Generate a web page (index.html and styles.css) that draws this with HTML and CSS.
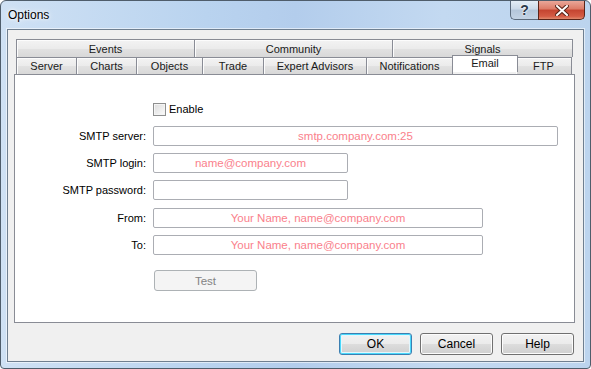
FILE: index.html
```html
<!DOCTYPE html>
<html lang="en">
<head>
  <meta charset="UTF-8" />
  <title>Options</title>
  <link rel="stylesheet" href="styles.css">
</head>
<body>
  <div class="window">
    <div class="titlebar">
      <span class="title">Options</span>
      <div class="caption-btns">
        <span class="cap cap-help">?</span>
        <span class="cap cap-close">
          <svg width="14" height="11" viewBox="0 0 14 11">
            <path d="M2 1 L12 10 M12 1 L2 10" stroke="#5a2418" stroke-width="4" stroke-linecap="square"/>
            <path d="M2 1 L12 10 M12 1 L2 10" stroke="#ffffff" stroke-width="2" stroke-linecap="square"/>
          </svg>
        </span>
      </div>
    </div>

    <div class="client">
      <div class="tab-row">
        <div class="tab w179">Events</div>
        <div class="tab w198">Community</div>
        <div class="tab w180">Signals</div>
      </div>
      <div class="tab-row">
        <div class="tab w61">Server</div>
        <div class="tab w60">Charts</div>
        <div class="tab w66">Objects</div>
        <div class="tab w61">Trade</div>
        <div class="tab w103">Expert Advisors</div>
        <div class="tab w86">Notifications</div>
        <div class="tab w64 selected">Email</div>
        <div class="tab w56">FTP</div>
      </div>

      <div class="panel">
        <div class="form">
          <span></span>
          <label class="check"><span class="box"></span>Enable</label>

          <span class="label">SMTP server:</span>
          <input class="field wide" type="text" placeholder="smtp.company.com:25">

          <span class="label">SMTP login:</span>
          <input class="field short" type="text" placeholder="name@company.com">

          <span class="label">SMTP password:</span>
          <input class="field short" type="text">

          <span class="label shift">From:</span>
          <input class="field mid shift" type="text" placeholder="Your Name, name@company.com">

          <span class="label">To:</span>
          <input class="field mid" type="text" placeholder="Your Name, name@company.com">

          <span></span>
          <div class="test-wrap"><button class="btn-test" disabled>Test</button></div>
        </div>
      </div>

      <div class="footer">
        <button class="btn default">OK</button>
        <button class="btn">Cancel</button>
        <button class="btn">Help</button>
      </div>
    </div>
  </div>
</body>
</html>
```

FILE: styles.css
```css
* {
  box-sizing: border-box;
}

body {
  margin: 0;
  font-family: 'Liberation Sans', Arial, sans-serif;
  font-size: 11px;
  color: #000;
  background: #fff;
}

.window {
  width: 591px;
  height: 369px;
  border: 1px solid #4f5d6b;
  border-radius: 6px 6px 4px 4px;
  background: linear-gradient(to right, #cfe1f4 0%, #b9d3ef 35%, #b3cdec 50%, #c3d9f1 75%, #bcd4ee 100%);
  display: flex;
  flex-direction: column;
  overflow: hidden;
}

.titlebar {
  height: 28px;
  display: flex;
  justify-content: space-between;
  align-items: flex-start;
  padding-left: 7px;
}

.title {
  font-size: 12px;
  margin-top: 7px;
  color: #000;
  text-shadow: 0 0 6px #ffffff, 0 0 3px #ffffff;
}

.caption-btns {
  display: flex;
  margin-right: 5px;
}

.cap {
  height: 19px;
  display: flex;
  align-items: center;
  justify-content: center;
  border: 1px solid #5b6a7c;
  border-top: none;
}

.cap-help {
  width: 28px;
  border-right: none;
  border-radius: 0 0 0 5px;
  background: linear-gradient(#e4edf6 0%, #cbd9e8 45%, #b4c6da 50%, #c3d3e5 100%);
  color: #2c3a4a;
  font-size: 14px;
  font-weight: bold;
  text-shadow: 0 0 2px #fff, 0 0 2px #fff;
}

.cap-close {
  width: 47px;
  border-color: #5a2418;
  border-radius: 0 0 5px 0;
  background: linear-gradient(#e9a799 0%, #dc7a66 45%, #c44430 50%, #d45b44 85%, #e08a6e 100%);
}

.client {
  flex: 1;
  margin: 0 6px 6px 6px;
  border: 1px solid #6f7f90;
  background: #f0f0f0;
  padding-top: 9px;
  box-shadow: 0 0 0 1px rgba(255, 255, 255, 0.55);
}

.tab-row {
  display: flex;
  margin: 0 10px 0 8px;
}

.tab {
  height: 18px;
  display: flex;
  align-items: center;
  justify-content: center;
  border: 1px solid #898c95;
  border-bottom: none;
  border-left: none;
  background: linear-gradient(#f3f3f3 0%, #ebebeb 50%, #e2e2e2 51%, #d8d8d8 100%);
  box-shadow: inset 1px 1px 0 #fcfcfc;
  color: #1a1a1a;
  white-space: nowrap;
}

.tab:first-child {
  border-left: 1px solid #898c95;
}

.tab-row + .tab-row .tab {
  height: 17px;
}

.tab.selected {
  position: relative;
  z-index: 1;
  height: 20px;
  margin: -2px -2px -1px -1px;
  width: 66px;
  border-left: 1px solid #898c95;
  background: #ffffff;
  box-shadow: none;
  padding-bottom: 3px;
}

.w56 { width: 56px; }
.w60 { width: 60px; }
.w61 { width: 61px; }
.w64 { width: 64px; }
.w66 { width: 66px; }
.w86 { width: 86px; }
.w103 { width: 103px; }
.w179 { width: 179px; }
.w180 { width: 180px; }
.w198 { width: 198px; }

.panel {
  height: 249px;
  margin: 0 8px 0 6px;
  border: 1px solid #898c95;
  background: #ffffff;
  padding-top: 24px;
}

.form {
  display: grid;
  grid-template-columns: 131px 1fr;
  column-gap: 7px;
  row-gap: 7px;
  align-items: center;
}

.label {
  text-align: right;
}

.check {
  height: 20px;
  display: flex;
  align-items: center;
  gap: 3px;
}

.box {
  width: 13px;
  height: 13px;
  border: 1px solid #8e8f8f;
  background: linear-gradient(135deg, #dcdcdc, #fbfbfb);
  box-shadow: inset 0 0 0 1px #f4f4f4;
}

.field {
  height: 20px;
  border: 1px solid #abadb3;
  border-radius: 2px;
  font-family: 'Liberation Sans', Arial, sans-serif;
  font-size: 11.5px;
  text-align: center;
  padding: 0 4px;
  background: #fff;
}

.field::placeholder {
  color: #fa7f8c;
  opacity: 1;
}

.wide { width: 405px; }
.short { width: 195px; }
.mid { width: 330px; }

.shift {
  margin-top: 1px;
}

.test-wrap {
  padding-top: 8px;
}

.btn-test {
  width: 103px;
  height: 21px;
  margin-left: 1px;
  border: 1px solid #adb2b5;
  border-radius: 3px;
  background: #f4f4f4;
  color: #838383;
  font-family: 'Liberation Sans', Arial, sans-serif;
  font-size: 11.5px;
}

.footer {
  display: flex;
  justify-content: flex-end;
  gap: 8px;
  padding-top: 10px;
  margin-right: 9px;
}

.btn {
  width: 73px;
  height: 22px;
  border: 1px solid #707070;
  border-radius: 3px;
  background: linear-gradient(#f2f2f2 0%, #ebebeb 50%, #dddddd 51%, #cfcfcf 100%);
  box-shadow: inset 0 0 0 1px #fcfcfc;
  font-family: 'Liberation Sans', Arial, sans-serif;
  font-size: 12px;
  color: #000;
  padding: 0;
}

.btn.default {
  border-color: #3c7fb1;
  box-shadow: inset 0 0 0 1px #48d8fb, inset 0 0 0 2px #e3f6fd;
}
```
